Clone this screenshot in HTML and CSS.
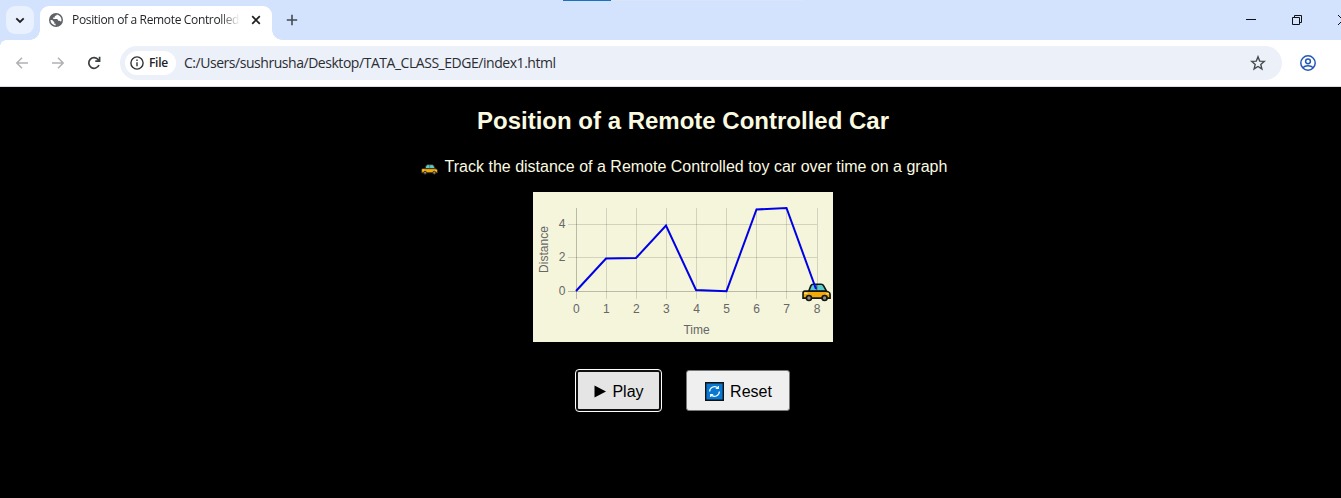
FILE: index.html
```html
<!DOCTYPE html>
<html lang="en">
<head>
<meta charset="utf-8">
<title>Position of a Remote Controlled Car</title>
<link rel="stylesheet" href="styles.css">
</head>
<body>
<svg class="defs" width="0" height="0">
  <symbol id="car" viewBox="0 0 28 18">
    <path d="M6.500 7.800 8.500 2.600Q9.200 1 10.800 1h7.700q1.600 0 2.300 1.400l3 5.600z" fill="#58cbd0" stroke="currentColor" stroke-width="1.600"/>
    <path d="M14.300 1.500v6" stroke="currentColor" stroke-width=".7"/>
    <path d="M1 14.400V9.600q0-1.800 2-2h19.500l3 .9q1.600.7 1.600 2.200v3.700z" fill="#f2a90c" stroke="currentColor" stroke-width="1.600"/>
    <path d="M2.200 9.700h3M23.500 10h2.400" stroke="#ffe36a" stroke-width="1.400"/>
    <circle cx="6.700" cy="14.300" r="2.400" fill="#8e8f8a" stroke="currentColor" stroke-width="1.600"/>
    <circle cx="21.800" cy="14.300" r="2.400" fill="#8e8f8a" stroke="currentColor" stroke-width="1.600"/>
  </symbol>
</svg>
<div class="window">
  <header class="tabstrip">
    <div class="progress"></div>
    <div class="tab-search"><svg width="28" height="28" fill="none" stroke="#1f1f1f" stroke-width="1.800"><path d="m10.300 12.300 3.700 3.700 3.700-3.700"/></svg></div>
    <div class="tab">
      <svg class="globe" width="14" height="14" viewBox="0 0 14 14"><circle cx="7" cy="7" r="7" fill="#5f6368"/><path d="M7.800 1.500c-.2 1-.8 1.300-2 1.500v1.500H4.200v1.600h3.600c1 .1 1.200.8 1.200 1.700h1.300c.8 0 1.200.4 1.600 1 .4-.5.6-1.200.6-1.900 0-2.500-1.900-4.900-4.700-5.400zM1.500 7.100c.1 2.800 2.300 5.200 5.100 5.400v-1.700H5.300V9.300L3.200 7.100z" fill="#fff"/></svg>
      <span class="tab-title">Position of a Remote Controlled</span>
      <svg class="close" width="10" height="10" stroke="#1f1f1f" stroke-width="1.700"><path d="m1.200 1.200 7.600 7.600m0-7.600L1.200 8.800"/></svg>
    </div>
    <svg class="plus" width="12" height="12" stroke="#444a52" stroke-width="1.600"><path d="M6 .8v10.400M.8 6h10.400"/></svg>
    <div class="window-controls">
      <svg width="10" height="10" stroke="#111"><path d="M0 4.500h10"/></svg>
      <svg width="10" height="10" stroke="#111" fill="none"><path d="M.5 2.500h7v7h-7zM2.500 2.500v-2h7v7h-2"/></svg>
      <svg width="10" height="10" stroke="#111"><path d="m0 0 10 10M10 0 0 10"/></svg>
    </div>
  </header>
  <nav class="toolbar">
    <svg class="nav-icon" width="14" height="14" fill="none" stroke="#afb1b4" stroke-width="1.500"><path d="M13 7H2M7 1.800 1.800 7 7 12.200"/></svg>
    <svg class="nav-icon" width="14" height="14" fill="none" stroke="#afb1b4" stroke-width="1.500"><path d="M1 7h11M7 1.800 12.200 7 7 12.200"/></svg>
    <svg class="nav-icon" width="14" height="14" fill="none" stroke="#3c4043" stroke-width="1.700"><path d="M12 9a5.300 5.300 0 1 1-.7-5.200L12.500 5M12.600.8V5.200H8.300"/></svg>
    <div class="address">
      <div class="chip">
        <svg width="14" height="14" fill="none" stroke="#303236" stroke-width="1.400"><circle cx="7" cy="7" r="6.100"/><path d="M7 6.200v4M7 3.500v1.500"/></svg>
        <span>File</span>
      </div>
      <span class="url">C:/Users/sushrusha/Desktop/TATA_CLASS_EDGE/index1.html</span>
      <svg class="star" width="16" height="16" fill="none" stroke="#474a4e" stroke-width="1.400"><path d="m8 1.800 1.700 4.300 4.600.3-3.500 3 1.100 4.500L8 11.500l-3.900 2.400 1.100-4.500-3.500-3 4.600-.3z"/></svg>
    </div>
    <svg class="profile" width="16" height="16" fill="none" stroke="#2458b8" stroke-width="1.500"><circle cx="8" cy="8" r="7.200"/><circle cx="8" cy="6.300" r="2.400"/><path d="M2.800 12.800c2.500-2.700 7.900-2.700 10.400 0"/></svg>
  </nav>
  <main class="page">
    <h1>Position of a Remote Controlled Car</h1>
    <p class="intro"><svg class="mini-car" width="17" height="11"><use href="#car"/></svg><span>Track the distance of a Remote Controlled toy car over time on a graph</span></p>
    <svg class="chart" width="300" height="150">
      <g class="grid">
        <path d="M73.500 16v91M103.500 16v91M133.500 16v91M163.500 16v91M193.500 16v91M223.500 16v91M253.500 16v91M284.500 16v91M35 32.500h249M35 65.500h249"/>
        <path class="axis" d="M43.500 16v91M35 99.500h249"/>
      </g>
      <g class="labels">
        <g text-anchor="end"><text x="32.500" y="36">4</text><text x="32.500" y="69">2</text><text x="32.500" y="103">0</text></g>
        <g text-anchor="middle">
          <text x="43.300" y="121">0</text><text x="73.300" y="121">1</text><text x="103.300" y="121">2</text><text x="133.300" y="121">3</text><text x="163.500" y="121">4</text><text x="193.500" y="121">5</text><text x="223.500" y="121">6</text><text x="253.500" y="121">7</text><text x="284" y="121">8</text>
          <text x="163.500" y="142">Time</text>
          <text transform="translate(15 57.500) rotate(-90)" textLength="47">Distance</text>
        </g>
      </g>
      <use href="#car" x="269" y="91" width="29" height="19"/>
      <path class="line" d="M43 99 73 66.500 103 66 133 33.500 163 98 193.500 99.200 223.500 17.500 253.500 16 283 97"/>
    </svg>
    <div class="actions">
      <button class="btn play"><svg width="12" height="13"><path d="M.5.500 12 6.500.5 12.500z"/></svg><span>Play</span></button>
      <button class="btn reset"><svg width="19" height="19" fill="none" stroke="#fff" stroke-width="1.200"><path d="M.7.700h17.600v17.600H.7z" fill="#0878d3" stroke="#111" stroke-width="1.400"/><path d="M4.600 9.500a4.900 4.900 0 0 1 8.500-3.200M14.400 9.500a4.900 4.900 0 0 1-8.500 3.200M10.800 6.500h2.500V4M8.200 12.500H5.700V15"/></svg><span>Reset</span></button>
    </div>
  </main>
</div>
</body>
</html>
```
FILE: styles.css
```css
* { box-sizing: border-box; }
body { margin: 0; background: #000; overflow: hidden; font-family: "Liberation Sans", Arial, sans-serif; }
svg { display: block; flex: none; }
.defs { position: absolute; }
.window { width: 1366px; height: 498px; }

.tabstrip { position: relative; display: flex; align-items: flex-start; height: 40px; padding: 6px 18px 0 6px; background: #d3e2fd; }
.progress { position: absolute; left: 563px; top: 0; width: 240px; height: 1px; background: linear-gradient(90deg, #1c70bc 48px, #dce5f5 48px); }
.tab-search { width: 28px; height: 28px; border-radius: 9px; background: #e9f0fe; }
.tab { position: relative; display: flex; align-items: center; width: 232px; height: 34px; margin-left: 6px; padding: 0 11px 6px 9px; background: #fff; border-radius: 9px 9px 0 0; }
.tab::before, .tab::after { content: ""; position: absolute; bottom: 0; width: 10px; height: 10px; }
.tab::before { left: -10px; background: radial-gradient(circle at 0 0, transparent 9.500px, #fff 10px); }
.tab::after { right: -10px; background: radial-gradient(circle at 100% 0, transparent 9.500px, #fff 10px); }
.tab-title { flex: none; width: 168px; margin-left: 9px; white-space: nowrap; font: 12px/18px "Open Sans", sans-serif; letter-spacing: -0.340px; color: #242629; -webkit-mask-image: linear-gradient(90deg, #000 148px, transparent); mask-image: linear-gradient(90deg, #000 148px, transparent); }
.close { margin-left: auto; }
.plus { margin: 8px 0 0 14px; }
.window-controls { display: flex; gap: 36px; margin: 9px 0 0 auto; }

.toolbar { position: relative; display: flex; align-items: center; height: 47px; padding: 0 50px 1px 15px; background: #fff; border-bottom: 1px solid #d9dce1; }
.toolbar::before { content: ""; position: absolute; left: 0; top: 0; width: 6px; height: 6px; background: radial-gradient(circle at 100% 100%, transparent 5.500px, #d3e2fd 6px); }
.nav-icon { margin-right: 22px; }
.nav-icon:nth-of-type(3) { margin-right: 19px; }
.address { display: flex; align-items: center; width: 1162px; height: 34px; padding: 0 16px 0 5px; border-radius: 17px; background: #ebf0f9; }
.chip { display: flex; align-items: center; gap: 5px; width: 51px; height: 24px; padding-left: 5px; border-radius: 12px; background: #fff; font: 600 12px/18px "Open Sans", sans-serif; letter-spacing: -0.300px; color: #202124; }
.url { margin-left: 8px; font: 14px/20px "Open Sans", sans-serif; letter-spacing: -0.460px; color: #2b2d31; white-space: nowrap; }
.star { margin-left: auto; }
.profile { margin-left: 18px; }

.page { display: flex; flex-direction: column; align-items: center; height: 411px; padding-top: 19px; background: #000; color: #fafae0; }
h1 { margin: 0; font-size: 24px; line-height: 30px; white-space: nowrap; }
.intro { display: flex; align-items: center; margin: 21px 0 0 2px; font-size: 16px; line-height: 20px; white-space: nowrap; }
.mini-car { margin: 4px 7px 0 0; color: #3a3015; }
.chart { margin-top: 15px; background: #f5f5dc; color: #161611; }
.grid { fill: none; stroke: rgba(0, 0, 0, .14); }
.axis { stroke: rgba(0, 0, 0, .24); }
.labels { font-size: 12px; fill: #666; }
.line { fill: none; stroke: #0000e8; stroke-width: 2; }
.actions { display: flex; gap: 25px; margin: 28px 1px 0 0; }
.btn { display: flex; align-items: center; justify-content: center; height: 41px; padding: 2px 0 0; border: 1px solid #777; border-radius: 3px; background: #efefef; color: #000; font: 16px/20px "Liberation Sans", Arial, sans-serif; }
.play { gap: 6px; width: 85px; padding-left: 2px; border: 2px solid #101010; background: #e5e5e5; outline: 1px solid #fff; outline-offset: 0; }
.reset { gap: 6px; width: 104px; padding-left: 2px; }
```
